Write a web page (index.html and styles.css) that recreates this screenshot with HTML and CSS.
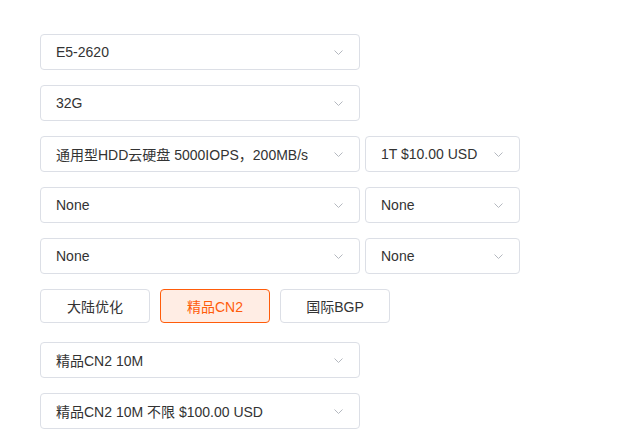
FILE: index.html
```html
<!DOCTYPE html>
<html lang="zh-CN">
<head>
    <meta charset="UTF-8">
    <meta name="viewport" content="width=device-width, initial-scale=1.0">
    <title>配置选择</title>
    <link rel="stylesheet" href="styles.css">
</head>
<body>
    <div class="config">
        <div class="row">
            <div class="select wide"><span>E5-2620</span><svg class="arrow" viewBox="0 0 9 5"><path d="M0.5 0.5 L4.5 4.5 L8.5 0.5"/></svg></div>
        </div>
        <div class="row">
            <div class="select wide"><span>32G</span><svg class="arrow" viewBox="0 0 9 5"><path d="M0.5 0.5 L4.5 4.5 L8.5 0.5"/></svg></div>
        </div>
        <div class="row">
            <div class="select wide"><span>通用型HDD云硬盘 5000IOPS，200MB/s</span><svg class="arrow" viewBox="0 0 9 5"><path d="M0.5 0.5 L4.5 4.5 L8.5 0.5"/></svg></div>
            <div class="select narrow"><span>1T $10.00 USD</span><svg class="arrow" viewBox="0 0 9 5"><path d="M0.5 0.5 L4.5 4.5 L8.5 0.5"/></svg></div>
        </div>
        <div class="row">
            <div class="select wide"><span>None</span><svg class="arrow" viewBox="0 0 9 5"><path d="M0.5 0.5 L4.5 4.5 L8.5 0.5"/></svg></div>
            <div class="select narrow"><span>None</span><svg class="arrow" viewBox="0 0 9 5"><path d="M0.5 0.5 L4.5 4.5 L8.5 0.5"/></svg></div>
        </div>
        <div class="row">
            <div class="select wide"><span>None</span><svg class="arrow" viewBox="0 0 9 5"><path d="M0.5 0.5 L4.5 4.5 L8.5 0.5"/></svg></div>
            <div class="select narrow"><span>None</span><svg class="arrow" viewBox="0 0 9 5"><path d="M0.5 0.5 L4.5 4.5 L8.5 0.5"/></svg></div>
        </div>
        <div class="row lines">
            <button class="line">大陆优化</button>
            <button class="line active">精品CN2</button>
            <button class="line">国际BGP</button>
        </div>
        <div class="row">
            <div class="select wide"><span>精品CN2 10M</span><svg class="arrow" viewBox="0 0 9 5"><path d="M0.5 0.5 L4.5 4.5 L8.5 0.5"/></svg></div>
        </div>
        <div class="row">
            <div class="select wide"><span>精品CN2 10M 不限 $100.00 USD</span><svg class="arrow" viewBox="0 0 9 5"><path d="M0.5 0.5 L4.5 4.5 L8.5 0.5"/></svg></div>
        </div>
    </div>
</body>
</html>
```
FILE: styles.css
```css
body {
    margin: 0;
    background: #fff;
    font-family: "Liberation Sans", Arial, "Noto Sans CJK SC", sans-serif;
    font-size: 14px;
    color: #333;
}
.config {
    padding: 34px 40px 0;
}
.row {
    display: flex;
    gap: 5px;
    margin-bottom: 15px;
}
.row:last-child {
    margin-bottom: 0;
}
.select {
    box-sizing: border-box;
    height: 36px;
    display: flex;
    align-items: center;
    justify-content: space-between;
    padding: 0 16px 0 15px;
    border: 1px solid #dcdfe6;
    border-radius: 4px;
    background: #fff;
    cursor: pointer;
}
.select.wide {
    width: 320px;
}
.select.narrow {
    width: 155px;
}
.arrow {
    width: 9px;
    height: 5px;
    flex-shrink: 0;
}
.arrow path {
    fill: none;
    stroke: #b4b8bf;
    stroke-width: 1;
}
.lines {
    gap: 10px;
    margin-bottom: 19px;
}
.line {
    box-sizing: border-box;
    width: 110px;
    height: 34px;
    border: 1px solid #dcdfe6;
    border-radius: 4px;
    background: #fff;
    font-family: inherit;
    font-size: 14px;
    color: #333;
    cursor: pointer;
}
.line.active {
    border-color: #ff5c0a;
    background: #ffede4;
    color: #ff5c0a;
}
```
